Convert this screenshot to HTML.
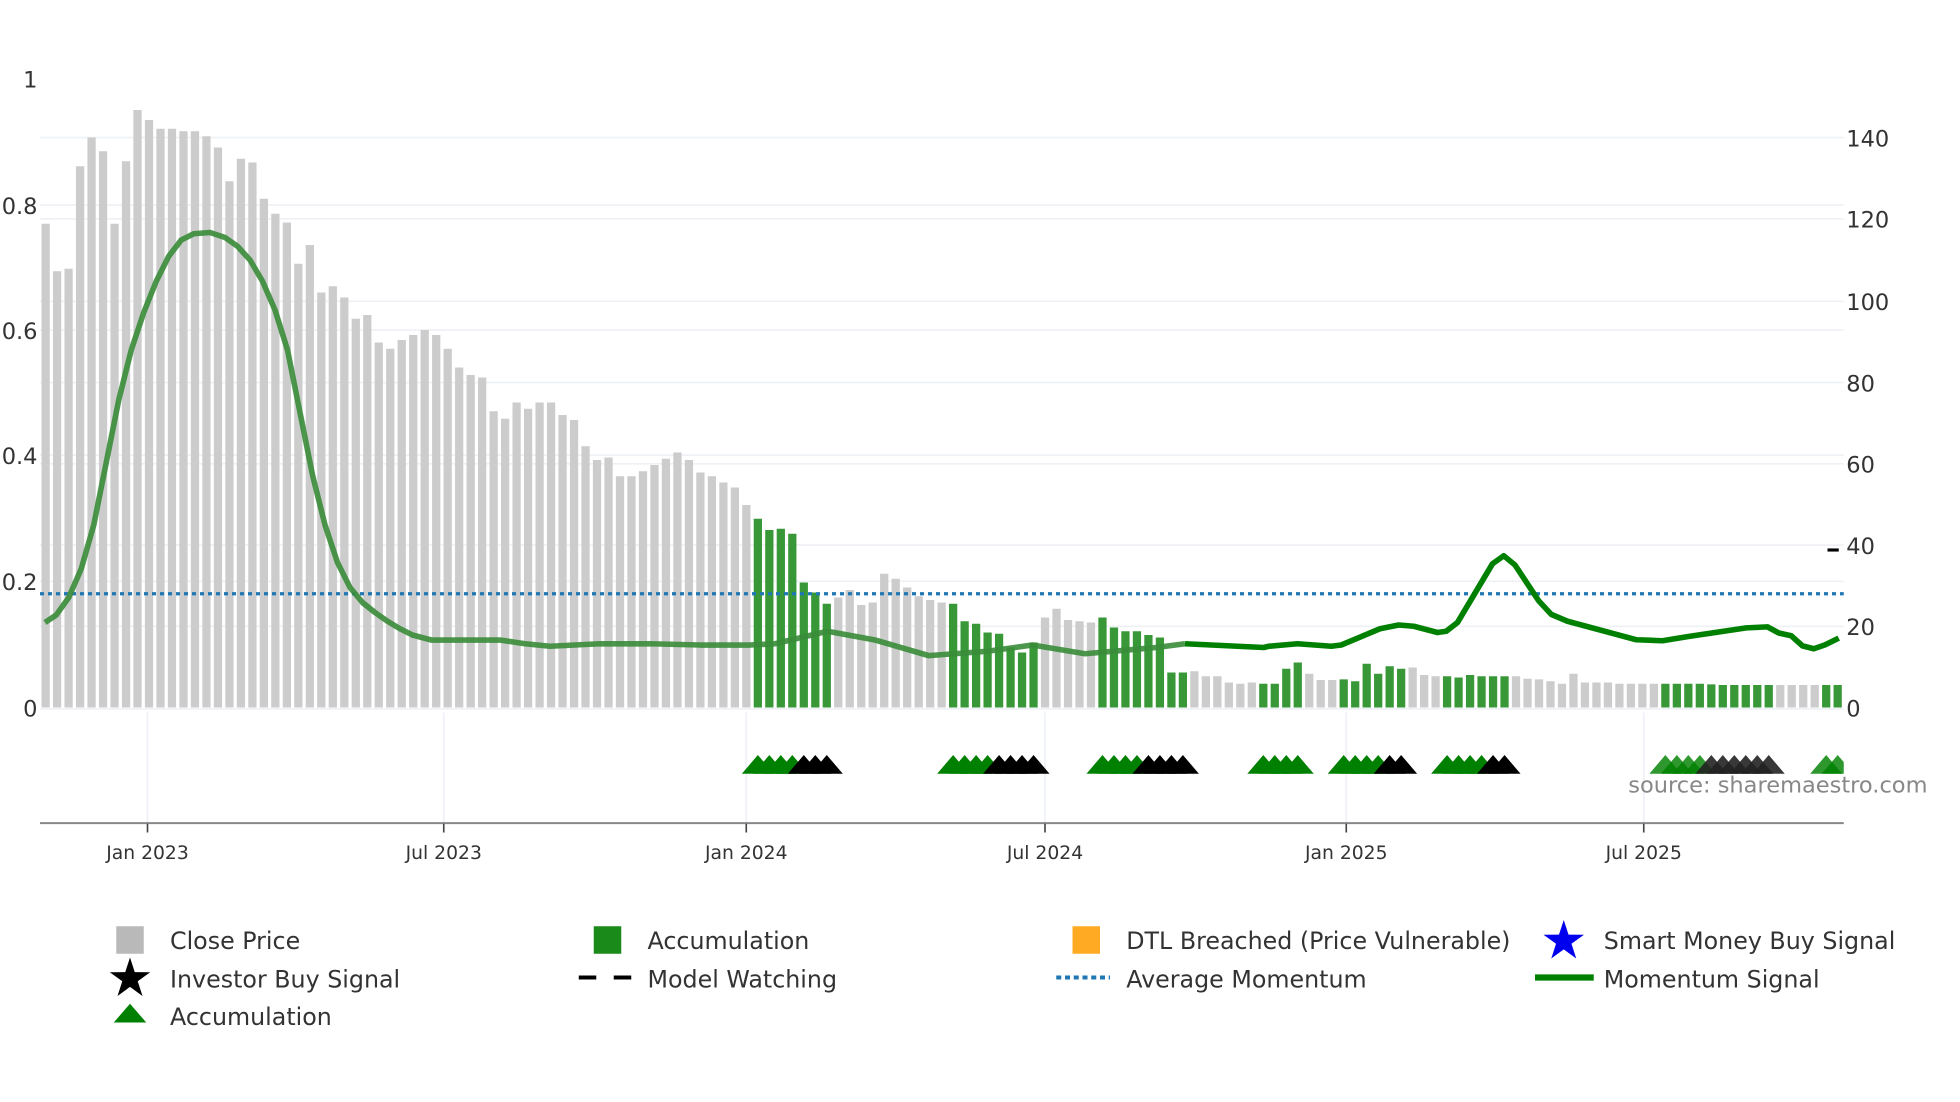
<!DOCTYPE html>
<html><head><meta charset="utf-8">
<style>
html,body{margin:0;padding:0;background:#fff;}
svg{display:block;font-family:"DejaVu Sans","Liberation Sans",sans-serif;}
</style></head>
<body>
<svg id="s" width="1960" height="1102" viewBox="0 0 1568 881.6" preserveAspectRatio="none" xmlns="http://www.w3.org/2000/svg">
<defs><clipPath id="pc"><rect x="32" y="40" width="1443" height="620"/></clipPath></defs>
<g id="grid" stroke="#edf0f5" stroke-width="1.3">
<line x1="32" x2="1475" y1="110" y2="110"/><line x1="32" x2="1475" y1="175" y2="175"/>
<line x1="32" x2="1475" y1="241" y2="241"/><line x1="32" x2="1475" y1="306" y2="306"/>
<line x1="32" x2="1475" y1="371" y2="371"/><line x1="32" x2="1475" y1="436" y2="436"/>
<line x1="32" x2="1475" y1="501" y2="501"/>
<line x1="32" x2="1475" y1="164" y2="164"/><line x1="32" x2="1475" y1="264" y2="264"/>
<line x1="32" x2="1475" y1="364" y2="364"/><line x1="32" x2="1475" y1="465" y2="465"/>
<line x1="32" x2="1475" y1="567" y2="567"/>
<line x1="118" x2="118" y1="570" y2="658"/><line x1="355" x2="355" y1="570" y2="658"/>
<line x1="597" x2="597" y1="570" y2="658"/><line x1="836" x2="836" y1="570" y2="658"/>
<line x1="1077" x2="1077" y1="570" y2="658"/><line x1="1315" x2="1315" y1="570" y2="658"/>
</g>
<g id="bars"></g>
<line x1="32" x2="1475" y1="475" y2="475" stroke="#1f77b4" stroke-width="2.6" stroke-dasharray="3.2,3.2"/>
<g id="lines" clip-path="url(#pc)"></g>
<g id="tris" clip-path="url(#pc)"></g>
<line x1="1462" x2="1471" y1="440" y2="440" stroke="#000" stroke-width="2.5"/>
<line x1="32" x2="1475" y1="658.5" y2="658.5" stroke="#888" stroke-width="1.6"/>
<g stroke="#444" stroke-width="1.3">
<line x1="118" x2="118" y1="659" y2="666"/><line x1="355" x2="355" y1="659" y2="666"/>
<line x1="597" x2="597" y1="659" y2="666"/><line x1="836" x2="836" y1="659" y2="666"/>
<line x1="1077" x2="1077" y1="659" y2="666"/><line x1="1315" x2="1315" y1="659" y2="666"/>
</g>
<g fill="#333" font-size="18" text-anchor="end">
<text x="30" y="70">1</text><text x="30" y="171">0.8</text><text x="30" y="271">0.6</text>
<text x="30" y="371">0.4</text><text x="30" y="472">0.2</text><text x="30" y="573">0</text>
</g>
<g fill="#333" font-size="18">
<text x="1477" y="117">140</text><text x="1477" y="182">120</text><text x="1477" y="248">100</text>
<text x="1477" y="313">80</text><text x="1477" y="378">60</text><text x="1477" y="443">40</text>
<text x="1477" y="508">20</text><text x="1477" y="573">0</text>
</g>
<g fill="#333" font-size="15" text-anchor="middle">
<text x="118" y="687">Jan 2023</text><text x="355" y="687">Jul 2023</text><text x="597" y="687">Jan 2024</text>
<text x="836" y="687">Jul 2024</text><text x="1077" y="687">Jan 2025</text><text x="1315" y="687">Jul 2025</text>
</g>
<text x="1542" y="634" text-anchor="end" fill="#888" font-size="18">source: sharemaestro.com</text>
<g font-size="19" fill="#333">
<rect x="93" y="741" width="22" height="22" fill="#b9b9b9"/><text x="136" y="759">Close Price</text>
<rect x="475" y="741" width="22" height="22" fill="#1a8a1a"/><text x="518" y="759">Accumulation</text>
<rect x="858" y="741" width="22" height="22" fill="#ffaa22"/><text x="901" y="759">DTL Breached (Price Vulnerable)</text>
<text x="1283" y="759">Smart Money Buy Signal</text>
<text x="136" y="790">Investor Buy Signal</text>
<text x="518" y="790">Model Watching</text>
<text x="901" y="790">Average Momentum</text>
<text x="1283" y="790">Momentum Signal</text>
<text x="136" y="820">Accumulation</text>
</g>
<polygon id="st1" fill="#0000ee" points=""/>
<polygon id="st2" fill="#000" points=""/>
<line x1="463" x2="477" y1="782" y2="782" stroke="#000" stroke-width="3.2"/>
<line x1="491" x2="505" y1="782" y2="782" stroke="#000" stroke-width="3.2"/>
<line x1="845" x2="888" y1="782" y2="782" stroke="#1f77b4" stroke-width="3.2" stroke-dasharray="4,3"/>
<line x1="1228" x2="1275" y1="782" y2="782" stroke="#008000" stroke-width="5"/>
<polygon fill="#008000" points="91,818 104,803 117,818"/>
</svg>
<script>
var NS="http://www.w3.org/2000/svg";
function el(t,a,p){var e=document.createElementNS(NS,t);for(var k in a)e.setAttribute(k,a[k]);p.appendChild(e);return e;}
var tops=[179,217,215,133,110,121,179,129,88,96,103,103,105,105,109,118,145,127,130,159,171,178,211,196,234,229,238,255,252,274,279,272,268,264,268,279,294,300,302,329,335,322,327,322,322,332,336,357,368,366,381,381,377,372,367,362,368,378,381,386,390,404,
415,424,423,427,466,474,483,
478,472,484,482,459,463,470,477,480,482,
483,497,499,506,507,518,522,514,
494,487,496,497,498,
494,502,505,505,508,510,538,538,
537,541,541,546,547,546,
547,547,535,530,
539,544,544,
543.5,545,531,539,533,535,
534,540,541,
541,542,540,541,541,541,
541,543,543.5,545,547,539,546,546,546,547,547,547,547,
547,547,547,547,547.5,548,548,548,548,548,
548,548,548,548,548,548];
var G=[[62,68],[79,86],[92,99],[106,109],[113,118],[122,127],[141,150],[155,156]];
function isG(i){for(var k=0;k<G.length;k++)if(i>=G[k][0]&&i<=G[k][1])return true;return false;}
function X(i){return 36.5+9.19*i;}
var bars=document.getElementById('bars');
for(var i=0;i<tops.length;i++){el('rect',{x:(X(i)-3.3).toFixed(2),y:tops[i],width:6.6,height:(566-tops[i]).toFixed(2),fill:isG(i)?'#389838':'#cccccc'},bars);}
var L=document.getElementById('lines');
var p1=[[36,498],[45,492],[55,478],[65,455],[75,420],[85,370],[95,320],[105,280],[115,250],[125,225],[135,205],[145,192],[155,187],[168,186],[180,190],[190,197],[200,208],[210,225],[220,248],[230,280],[240,330],[250,380],[260,420],[270,450],[280,470],[290,482],[300,490],[310,497],[320,503],[330,508],[345,512],[370,512],[400,512],[420,515],[440,517],[480,515],[520,515],[560,516],[600,516],[620,515],[662,505],[700,512],[743,524.5],[790,521],[826,516],[868,523],[925,518],[948,515]];
var p2=[[948,515],[1011,518],[1015,517],[1038,515],[1065,517],[1073,516],[1104,503],[1119,500],[1131,501],[1150,506],[1157,505],[1166,498],[1194,451],[1203,444.6],[1212,452],[1231,480.7],[1241,491.5],[1254,497],[1309,511.8],[1330,512.6],[1352,509],[1397,502.3],[1414,501.5],[1423,506.4],[1433,508.6],[1442,516.7],[1451,519],[1460,515.9],[1471,510.5]];
function pts(a){return a.map(function(p){return p[0]+','+p[1];}).join(' ');}
el('polyline',{points:pts(p1),fill:'none',stroke:'#3a8c3a','stroke-width':4.5,'stroke-linejoin':'round','stroke-opacity':0.9},L);
el('polyline',{points:pts(p2),fill:'none',stroke:'#008000','stroke-width':4.5,'stroke-linejoin':'round'},L);
var T=document.getElementById('tris');
function tri(i,c,o){var x=X(i);el('polygon',{points:(x-12.8)+',619 '+x+',604 '+(x+12.8)+',619',fill:c,'fill-opacity':o},T);}
var grp=[[62,65,66,68,1],[79,82,83,86,1],[92,95,96,99,1],[106,109,0,-1,1],[113,116,117,118,1],[122,125,126,127,1],[141,144,145,150,0.82],[155,156,0,-1,0.82]];
grp.forEach(function(g){for(var i=g[0];i<=g[1];i++)tri(i,'#008000',g[4]);for(var j=g[2];j<=g[3];j++)tri(j,g[4]<1?'#222':'#000',g[4]<1?0.9:1);});
function star(cx,cy,R,r){var s=[];for(var k=0;k<10;k++){var a=-Math.PI/2+k*Math.PI/5,rr=k%2?r:R;s.push((cx+rr*Math.cos(a)).toFixed(2)+','+(cy+rr*Math.sin(a)).toFixed(2));}return s.join(' ');}
document.getElementById('st1').setAttribute('points',star(1251,753,17,6.5));
document.getElementById('st2').setAttribute('points',star(104,783,17,6.5));
</script>
</body></html>
